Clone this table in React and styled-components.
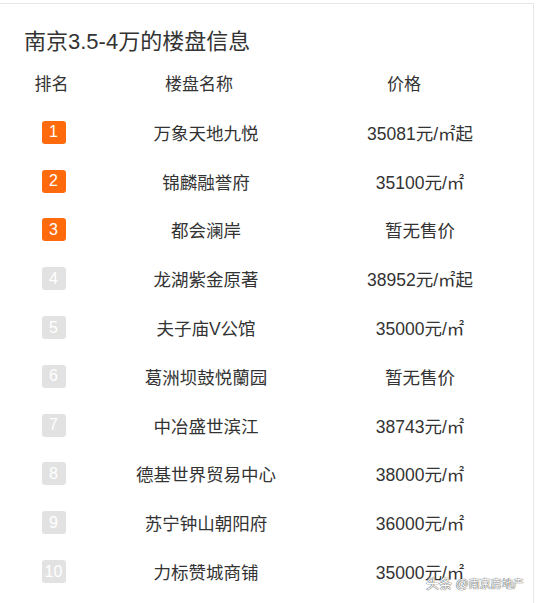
import React from "react";
import styled, { createGlobalStyle } from "styled-components";

const rows = [
  { name: "万象天地九悦", price: "35081元/㎡起" },
  { name: "锦麟融誉府", price: "35100元/㎡" },
  { name: "都会澜岸", price: "暂无售价" },
  { name: "龙湖紫金原著", price: "38952元/㎡起" },
  { name: "夫子庙V公馆", price: "35000元/㎡" },
  { name: "葛洲坝鼓悦蘭园", price: "暂无售价" },
  { name: "中冶盛世滨江", price: "38743元/㎡" },
  { name: "德基世界贸易中心", price: "38000元/㎡" },
  { name: "苏宁钟山朝阳府", price: "36000元/㎡" },
  { name: "力标赞城商铺", price: "35000元/㎡" },
];

export default function App() {
  return (
    <>
      <GlobalStyle />
      <Card>
        <Title>南京3.5-4万的楼盘信息</Title>
        <HeadRow>
          <Cell>排名</Cell>
          <Cell>楼盘名称</Cell>
          <Cell>价格</Cell>
        </HeadRow>
        {rows.map((r, i) => (
          <Row key={i}>
            <Cell>
              <Badge $top={i < 3}>{i + 1}</Badge>
            </Cell>
            <Cell>{r.name}</Cell>
            <Cell>{r.price}</Cell>
          </Row>
        ))}
        <Watermark>
          头条 @<small>南京房地产</small>
        </Watermark>
      </Card>
    </>
  );
}

const GlobalStyle = createGlobalStyle`
  body {
    margin: 0;
    background: #fff;
    font-family: "Liberation Sans", "Noto Sans CJK SC", sans-serif;
    overflow: hidden;
  }
`;

const Card = styled.div`
  position: relative;
  margin: 3px 0 0 -1px;
  width: 535px;
  height: 620px;
  border: 1px solid #e6e6e6;
  box-sizing: border-box;
  padding: 22px 0 0 24px;
  color: #333;
`;

const Title = styled.h2`
  margin: 0;
  font-size: 22px;
  line-height: 32px;
  font-weight: normal;
  color: #333;
`;

const HeadRow = styled.div`
  display: grid;
  grid-template-columns: 55px 240px 170px;
  height: 40px;
  margin-top: 4px;
  margin-bottom: 6px;
  align-items: center;
  font-size: 17px;
`;

const Row = styled.div`
  display: grid;
  grid-template-columns: 59px 246px 182px;
  height: 48.8px;
  align-items: center;
  font-size: 17.5px;
`;

const Cell = styled.div`
  display: flex;
  justify-content: center;
  align-items: center;
  white-space: nowrap;
`;

const Badge = styled.span`
  display: inline-flex;
  align-items: center;
  justify-content: center;
  width: 24px;
  height: 23px;
  border-radius: 3px;
  background: ${(p) => (p.$top ? "#ff6a0c" : "#e2e2e2")};
  color: #fff;
  font-size: 16px;
`;

const Watermark = styled.div`
  position: absolute;
  left: 426px;
  top: 569px;
  font-size: 13px;
  color: #fff;
  text-shadow: 0 0 1px #444, 0 0 1px #444;
  white-space: nowrap;

  small {
    font-size: 11px;
  }
`;
